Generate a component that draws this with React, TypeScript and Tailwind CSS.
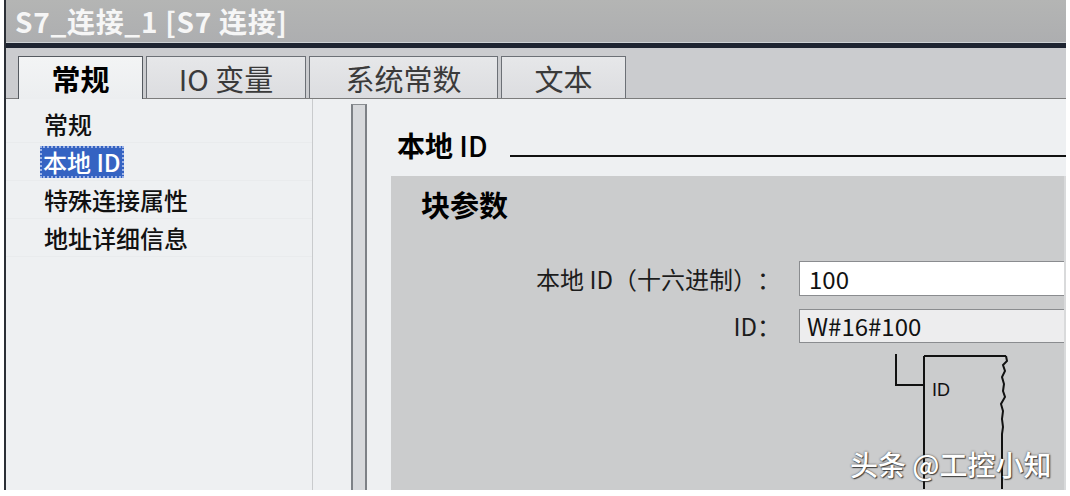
import React from "react";

const tabs = [
  { label: "常规", w: "w-[125px]", active: true },
  { label: "IO 变量", w: "w-[160px]", active: false },
  { label: "系统常数", w: "w-[189px]", active: false },
  { label: "文本", w: "w-[125px]", active: false },
];

const navItems = ["常规", "本地 ID", "特殊连接属性", "地址详细信息"];

export default function App() {
  return (
    <div className="relative w-[1070px] h-[496px] overflow-hidden bg-white font-['Noto_Sans_CJK_SC','Noto_Sans',sans-serif]">
      <div className="ml-[4px] w-[1062px] h-[490px] border-l-2 border-[#2b2f36] flex flex-col">
        {/* title bar */}
        <div className="h-[42px] shrink-0 bg-gradient-to-b from-[#b4b5b4] to-[#adaeb0] flex items-center pl-[9px]">
          <span className="text-[28px] leading-[32px] font-bold text-[#f6f6f6] tracking-[0.7px]">
            S7_连接_1 [S7 连接]
          </span>
        </div>
        <div className="h-[1px] shrink-0 bg-[#cfd3d6]" />
        <div className="h-[5px] shrink-0 bg-[#1e2431]" />
        {/* tab strip */}
        <div className="h-[51px] shrink-0 bg-[#cbcccf] border-b border-[#7c7c7c] flex items-end pl-[12px] gap-[3px]">
          {tabs.map((t) =>
            t.active ? (
              <div
                key={t.label}
                className={`${t.w} h-[43px] -mb-[1px] relative z-10 bg-gradient-to-b from-[#f3f4f5] to-[#eceef0] border border-b-0 border-[#555a60] flex items-center justify-center`}
              >
                <span className="text-[29px] leading-[34px] font-bold text-black">{t.label}</span>
              </div>
            ) : (
              <div
                key={t.label}
                className={`${t.w} h-[42px] bg-gradient-to-b from-[#e6e7e9] to-[#dcdde0] border border-b-0 border-[#6c7076] flex items-center justify-center`}
              >
                <span className="text-[29px] leading-[34px] text-[#3a3a3a]">{t.label}</span>
              </div>
            )
          )}
        </div>
        {/* content */}
        <div className="flex-1 flex bg-[#eef0f2] min-h-0">
          {/* nav */}
          <div className="w-[307px] shrink-0 border-r border-[#c9cbcd] pt-[6px]">
            {navItems.map((n, i) => (
              <div key={n} className="h-[38px] border-b border-[#e9ebed] flex items-center pl-[38px]">
                {i === 1 ? (
                  <span className="h-[32px] px-[3px] -ml-[4px] flex items-center bg-[#3563c2] outline-2 outline-dotted outline-[#9db3e6] -outline-offset-2 text-white text-[24px] leading-[30px] font-medium">
                    {n}
                  </span>
                ) : (
                  <span className="text-[24px] leading-[30px] font-medium text-[#111]">{n}</span>
                )}
              </div>
            ))}
          </div>
          <div className="w-[38px] shrink-0" />
          {/* splitter */}
          <div className="w-[16px] shrink-0 mt-[5px] border-x-2 border-[#7d8186] bg-[#d7d9dc] border-t border-t-[#8a8e92]" />
          <div className="w-[24px] shrink-0" />
          {/* right panel */}
          <div className="flex-1 flex flex-col min-w-0">
            <div className="h-[77px] shrink-0 flex items-start pt-[29px] pl-[6px]">
              <span className="text-[28px] leading-[34px] font-bold text-black whitespace-nowrap">
                本地 <span className="font-medium">ID</span>
              </span>
              <div className="flex-1 ml-[22px] mt-[27px] h-[2px] bg-[#111]" />
            </div>
            <div className="flex-1 bg-[#cbcccd] border-r-2 border-[#d9dadb] pt-[12px] flex flex-col">
              <div className="pl-[30px] text-[29px] leading-[32px] font-bold text-black">块参数</div>
              <div className="mt-[41px] flex items-center">
                <div className="w-[388px] shrink-0 flex justify-end text-[24px] leading-[30px] text-[#1c1c1c] whitespace-nowrap">
                  <span>本地 ID（十六进制）</span>
                  <span className="w-[22px] text-right">：</span>
                </div>
                <div className="ml-[20px] flex-1 h-[35px] bg-white border border-[#8a8c8f] border-r-0 flex items-center pl-[9px] text-[24px] text-[#111]">
                  100
                </div>
              </div>
              <div className="mt-[13px] flex items-center">
                <div className="w-[388px] shrink-0 flex justify-end text-[24px] leading-[30px] text-[#1c1c1c]">
                  <span>ID</span>
                  <span className="w-[22px] text-right">：</span>
                </div>
                <div className="ml-[20px] flex-1 h-[34px] bg-[#ededee] border border-[#8a8c8f] border-r-0 flex items-center pl-[7px] text-[24px] text-[#111]">
                  W#16#100
                </div>
              </div>
              <div className="mt-[6px] pl-[488px]">
                <svg width="140" height="140" viewBox="0 0 140 140" fill="none">
                  <path d="M17 5 V36 H45" stroke="#111" strokeWidth="2" />
                  <path d="M45 7 V140" stroke="#111" strokeWidth="2" />
                  <path d="M45 7 H127" stroke="#111" strokeWidth="2" />
                  <path
                    d="M127 7 L128 12 L124 16 L126 22 L123 28 L125 35 L124 42 L126 48 L122 55 L124 62 L123 70 L124 78 L123 85 L123 140"
                    stroke="#111"
                    strokeWidth="2"
                  />
                  <text x="53" y="47" fontSize="18" fill="#111" fontFamily="Liberation Sans, sans-serif">
                    ID
                  </text>
                </svg>
              </div>
            </div>
          </div>
        </div>
      </div>
      {/* watermark */}
      <div className="absolute left-[850px] top-[446px] text-[28px] leading-[36px] font-medium text-white whitespace-nowrap [text-shadow:0_0_2px_rgba(40,40,40,0.9),1px_1px_1px_rgba(40,40,40,0.8)]">
        头条 @工控小知
      </div>
    </div>
  );
}
